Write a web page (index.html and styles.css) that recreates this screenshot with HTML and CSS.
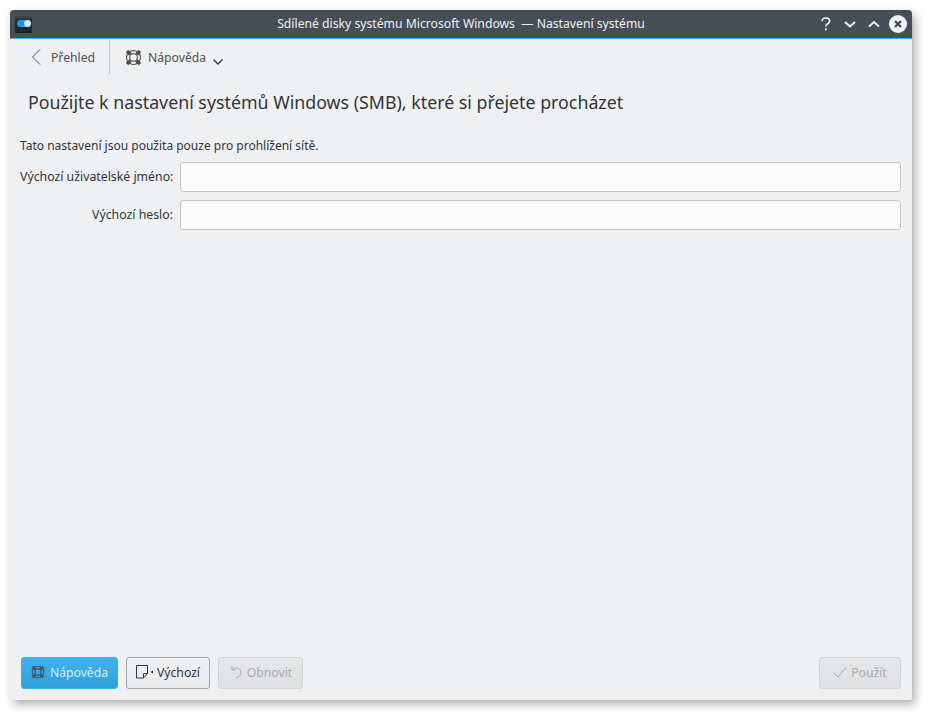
FILE: index.html
```html
<!DOCTYPE html>
<html lang="cs">
<head>
<meta charset="utf-8">
<title>Sdílené disky systému Microsoft Windows — Nastavení systému</title>
<link rel="stylesheet" href="styles.css">
</head>
<body>
<div class="window">
  <header class="titlebar">
    <div class="appicon"><span class="toggle"><span class="knob"></span></span></div>
    <div class="wintitle">Sdílené disky systému Microsoft Windows &nbsp;— Nastavení systému</div>
    <div class="winbtns">
      <svg class="wb" width="18" height="18" viewBox="-1 -1 18 18"><path d="M4 5.200C4.200 3 5.800 2 7.900 2c2.100 0 3.700 1.200 3.700 3 0 1.400-.8 2.100-1.900 2.800C8.500 8.400 7.900 9 7.900 10.600" fill="none" stroke="#eff0f1" stroke-width="1.700"/><rect x="7" y="12.400" width="1.900" height="1.900" fill="#eff0f1"/></svg>
      <svg class="wb" width="18" height="18" viewBox="-2 -2 18 18"><path d="M2 5l5 4.500L12 5" fill="none" stroke="#eff0f1" stroke-width="2"/></svg>
      <svg class="wb" width="18" height="18" viewBox="-2 -2 18 18"><path d="M2 9.500L7 5l5 4.500" fill="none" stroke="#eff0f1" stroke-width="2"/></svg>
      <svg class="wb" width="18" height="18" viewBox="0 0 18 18"><circle cx="9" cy="9" r="9" fill="#eff0f1"/><path d="M6 6l6 6M12 6l-6 6" stroke="#474e56" stroke-width="2.400"/></svg>
    </div>
  </header>
  <nav class="toolbar">
    <button class="tool back">
      <svg width="14" height="18" viewBox="0 0 14 18"><path d="M11 1.500L3.500 9 11 16.500" fill="none" stroke="#4d5257" stroke-width="1"/></svg>
      <span>Přehled</span>
    </button>
    <div class="sep"></div>
    <button class="tool help">
      <svg width="17" height="17" viewBox="0 0 17 17"><g fill="none" stroke="#4d4d4d" stroke-width="1.100"><circle cx="8.500" cy="8.500" r="3.800"/><circle cx="8.500" cy="8.500" r="7"/></g><g fill="#4d4d4d"><path d="M.8 3.200L3.200.8l3.600 3.400-2.600 2.600zM16.200 3.200L13.800.8l-3.600 3.400 2.600 2.600zM.8 13.800l2.400 2.400 3.600-3.400-2.600-2.600zM16.200 13.800l-2.400 2.400-3.600-3.400 2.600-2.600z"/></g></svg>
      <span>Nápověda</span>
      <svg class="chev" width="12" height="8" viewBox="0 0 12 8"><path d="M1.500 1.500L6 6l4.500-4.500" fill="none" stroke="#31363b" stroke-width="1.400"/></svg>
    </button>
  </nav>
  <main class="content">
    <h1 class="heading">Použijte k nastavení systémů Windows (SMB), které si přejete procházet</h1>
    <p class="note">Tato nastavení jsou použita pouze pro prohlížení sítě.</p>
    <div class="form">
      <label class="lab" for="user">Výchozí uživatelské jméno:</label>
      <input class="field" id="user" type="text">
      <label class="lab" for="pass">Výchozí heslo:</label>
      <input class="field" id="pass" type="password">
    </div>
  </main>
  <footer class="footer">
    <button class="btn primary">
      <svg width="14" height="14" viewBox="0 0 17 17"><g fill="none" stroke="#3f5363" stroke-width="1.400"><circle cx="8.500" cy="8.500" r="3.800"/><circle cx="8.500" cy="8.500" r="7"/></g><g fill="#3f5363"><path d="M.8 3.200L3.200.8l3.600 3.400-2.600 2.600zM16.200 3.200L13.800.8l-3.600 3.400 2.600 2.600zM.8 13.800l2.400 2.400 3.600-3.400-2.600-2.600zM16.200 13.800l-2.400 2.400-3.600-3.400 2.600-2.600z"/></g></svg>
      <span>Nápověda</span>
    </button>
    <button class="btn normal">
      <svg width="19" height="14" viewBox="0 0 19 14"><path d="M.5.500h11v8l-4 4.500h-7zM7.500 13V8.500h4" fill="none" stroke="#31363b"/><path d="M17 5.500v3L14.500 7z" fill="#31363b"/></svg>
      <span>Výchozí</span>
    </button>
    <button class="btn disabled">
      <svg width="14" height="14" viewBox="0 0 14 14"><path d="M3 1v4h4M3.300 5C4.500 3.500 6 3 7.300 3 10 3 12 5 12 7.700s-2 4.800-4.800 4.800" fill="none" stroke="#a6a8aa" stroke-width="1"/></svg>
      <span>Obnovit</span>
    </button>
    <button class="btn disabled apply">
      <svg width="14" height="12" viewBox="0 0 14 12"><path d="M1 7l4 4 8-9.500" fill="none" stroke="#a6a8aa" stroke-width="1"/></svg>
      <span>Použít</span>
    </button>
  </footer>
</div>
</body>
</html>
```
FILE: styles.css
```css
html, body { margin: 0; padding: 0; background: #fff; }
body { width: 928px; height: 716px; overflow: hidden; font-family: "Noto Sans", sans-serif; font-size: 12.200px; color: #31363b; }
.window {
  width: 902px; height: 690px; margin: 10px 0 0 10px;
  display: flex; flex-direction: column;
  background: #eff0f1; border-radius: 4px 4px 2px 2px;
  box-shadow: 3px 4px 10px rgba(0,0,0,.33);
  overflow: hidden;
}
.titlebar {
  height: 29px; box-sizing: border-box; flex: none; display: flex; align-items: center;
  background: #474e56; border-bottom: 1.500px solid #3daee9; color: #eff0f1;
  position: relative;
}
.appicon { width: 17px; height: 17px; margin-left: 5px; display: flex; justify-content: center; border-radius: 1px; box-sizing: border-box; background: linear-gradient(#40464d 0, #40464d 1px, #2a2e33 4px, #202326 100%); }
.toggle { width: 14px; height: 7px; margin-top: 4px; border-radius: 4px; background: #1e90ff; display: flex; justify-content: flex-end; }
.knob { width: 7px; height: 7px; border-radius: 50%; background: #d4e9fb; }
.wintitle { flex: 1; text-align: center; font-size: 12.200px; line-height: 28px; white-space: pre; margin-right: 22px; }
.winbtns { display: flex; align-items: center; gap: 6px; padding-right: 5px; position: absolute; right: 0; top: 5px; }
.wb { display: block; flex: none; }
.toolbar { height: 37px; flex: none; display: flex; align-items: stretch; padding: 1px 0 0 0; box-sizing: border-box; }
.tool { background: none; border: 0; padding: 0; display: flex; align-items: center; font: inherit; color: #4d5257; height: 34px; }
.back { width: 99px; padding-left: 19px; gap: 8px; box-sizing: border-box; }
.help { padding-left: 15px; gap: 6px; }
.chev { margin: 10px 0 0 0; }
.sep { width: 1px; height: 34px; background: #c6c8ca; }
.content { flex: 1; padding: 0 11px 0 10px; }
.heading { font-weight: 400; font-size: 17.800px; line-height: 24px; margin: 14px 0 0 8px; color: #31363b; }
.note { margin: 22px 0 0 0; line-height: 20px; font-size: 12px; }
.form { display: grid; grid-template-columns: 153px 1fr; column-gap: 7px; row-gap: 8px; margin-top: 6px; align-items: center; }
.lab { text-align: right; white-space: nowrap; line-height: 20px; font-size: 12.300px; }
.field { height: 30px; box-sizing: border-box; border: 1px solid #c4c6c8; border-radius: 3px; background: #fcfcfc; width: 100%; margin: 0; padding: 0 6px; box-shadow: inset 0 1px 1px rgba(0,0,0,.03); }
.footer { height: 43px; flex: none; display: flex; gap: 8px; padding: 0 11px; align-items: flex-start; }
.btn { height: 32px; box-sizing: border-box; display: flex; align-items: center; justify-content: center; gap: 5px; font: inherit; padding: 0 0 2px; border-radius: 3px; }
.primary { width: 97px; background: linear-gradient(#3fb2ee, #2f9fdb); border: 1px solid #3daee9; color: #d9eefb; gap: 5px; }
.normal { width: 84px; background: linear-gradient(#f1f2f3, #e9eaeb); border: 1px solid #a5a7a9; color: #31363b; gap: 2px; }
.disabled { width: 85px; background: linear-gradient(#e6e7e8, #dfe0e1); border: 1px solid #d2d3d5; color: #a6a8aa; gap: 4px; }
.apply { width: 82px; margin-left: auto; }
```
